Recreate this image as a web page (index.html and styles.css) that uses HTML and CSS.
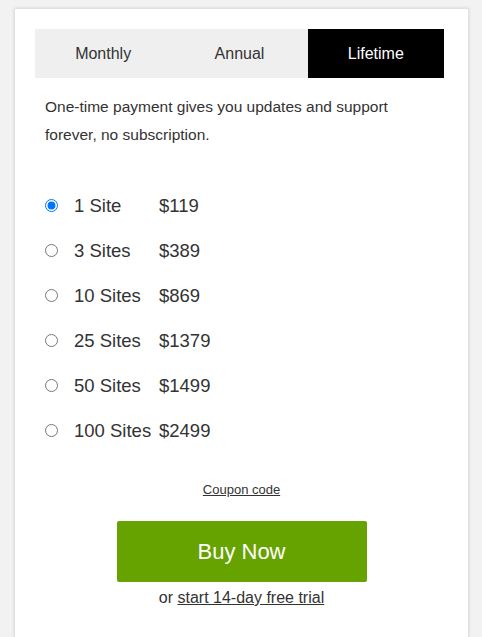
FILE: index.html
```html
<!DOCTYPE html>
<html>
<head>
<meta charset="utf-8">
<link rel="stylesheet" href="styles.css">
</head>
<body>
<div class="card">
  <div class="tabs">
    <div class="tab">Monthly</div>
    <div class="tab">Annual</div>
    <div class="tab active">Lifetime</div>
  </div>
  <p class="desc">One-time payment gives you updates and support forever, no subscription.</p>
  <div class="options">
    <label class="opt"><input type="radio" name="p" checked><span class="name">1 Site</span><span class="price">$119</span></label>
    <label class="opt"><input type="radio" name="p"><span class="name">3 Sites</span><span class="price">$389</span></label>
    <label class="opt"><input type="radio" name="p"><span class="name">10 Sites</span><span class="price">$869</span></label>
    <label class="opt"><input type="radio" name="p"><span class="name">25 Sites</span><span class="price">$1379</span></label>
    <label class="opt"><input type="radio" name="p"><span class="name">50 Sites</span><span class="price">$1499</span></label>
    <label class="opt"><input type="radio" name="p"><span class="name">100 Sites</span><span class="price">$2499</span></label>
  </div>
  <div class="coupon"><a href="#">Coupon code</a></div>
  <div class="buy"><a class="btn" href="#">Buy Now</a></div>
  <div class="trial">or <a href="#">start 14-day free trial</a></div>
</div>
</body>
</html>
```
FILE: styles.css
```css
html, body {
  margin: 0;
  padding: 0;
  background: #f2f2f2;
  font-family: "Liberation Sans", Arial, sans-serif;
  color: #333;
}
body {
  padding: 9px 0 0 15px;
  height: 637px;
  box-sizing: border-box;
  overflow: hidden;
}
.card {
  width: 453px;
  height: 628px;
  box-sizing: border-box;
  background: #fff;
  box-shadow: 0 0 3px 1px rgba(0, 0, 0, 0.12);
  padding: 20px 20px 0 20px;
}
.tabs {
  display: flex;
  width: 409px;
  height: 49px;
  background: #efefef;
}
.tab {
  flex: 1;
  display: flex;
  align-items: center;
  justify-content: center;
  font-size: 16px;
  color: #333;
}
.tab.active {
  background: #000;
  color: #fff;
}
.desc {
  margin: 15px 0 0 10px;
  max-width: 370px;
  font-size: 15.5px;
  line-height: 28px;
  color: #333;
}
.options {
  margin: 34px 0 0 10px;
  display: flex;
  flex-direction: column;
}
.opt {
  display: flex;
  align-items: center;
  height: 45px;
  font-size: 18.5px;
  color: #333;
}
.opt input {
  margin: 0;
  width: 13px;
  height: 13px;
}
.name {
  margin-left: 16px;
  min-width: 80px;
  margin-right: 5px;
}
.coupon {
  margin-top: 30px;
  text-align: center;
  font-size: 13px;
  line-height: 14px;
}
.coupon a, .trial a {
  color: #333;
  text-decoration: underline;
}
.buy {
  margin-top: 24px;
  display: flex;
  justify-content: center;
}
.btn {
  display: flex;
  align-items: center;
  justify-content: center;
  width: 250px;
  height: 61px;
  background: #66a300;
  color: #fff;
  font-size: 22px;
  text-decoration: none;
  border-radius: 2px;
}
.trial {
  margin-top: 7px;
  text-align: center;
  font-size: 16px;
  line-height: 18px;
}
```
